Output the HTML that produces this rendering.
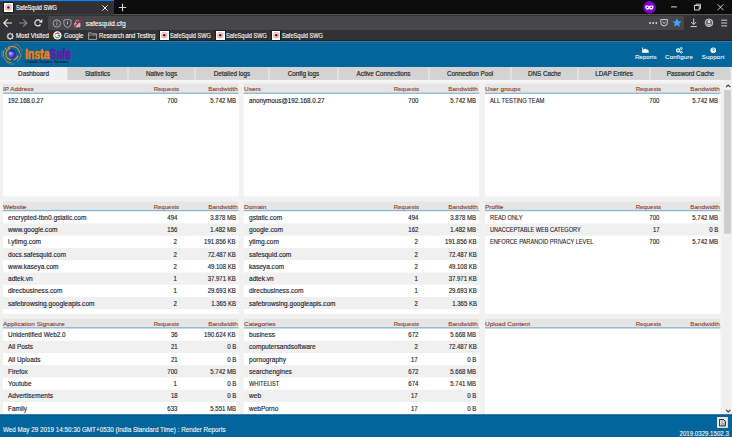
<!DOCTYPE html>
<html><head><meta charset="utf-8"><style>*{margin:0;padding:0;box-sizing:border-box}
html,body{width:732px;height:437px;overflow:hidden;background:#f1f1f1;font-family:'Liberation Sans',sans-serif;position:relative}
.a{position:absolute}
.t{position:absolute;white-space:nowrap}
</style></head>
<body>
<svg class="a" style="left:0px;top:0px" width="732" height="15"><rect x="0.000" y="0.000" width="732.000" height="14.600" fill="#0c0c0d"/></svg>
<svg class="a" style="left:0px;top:0px" width="114" height="15"><rect x="0.000" y="0.000" width="114.000" height="14.600" fill="#323234"/></svg>
<svg class="a" style="left:0px;top:0px" width="114" height="2"><rect x="0.000" y="0.000" width="114.000" height="1.100" fill="#0a84ff"/></svg>
<svg class="a" style="left:0px;top:14px" width="732" height="27"><rect x="0.000" y="0.600" width="732.000" height="26.000" fill="#323234"/></svg>
<div class="a" style="left:48.4px;top:16.0px;width:635.4px;height:13.8px;background:#474749;border-radius:2px;"></div>
<svg class="a" style="left:0px;top:40px" width="732" height="2"><rect x="0.000" y="0.000" width="732.000" height="1.200" fill="#26221f"/></svg>
<div class="a" style="left:4.3px;top:3.2px;width:8.7px;height:8.7px;background:#fff;box-shadow:0 0 0 0.7px #151515;"></div>
<svg class="a" style="left:4.3px;top:3.2px" width="8.7" height="8.7" viewBox="0 0 8.7 8.7"><circle cx="4.35" cy="4.45" r="2.7" fill="#ffe6da" stroke="#ffb594" stroke-width="1.4"/><circle cx="4.4" cy="4.5" r="1.3" fill="#1e10b0"/></svg>
<div class="t" style="top:4.71px;font-size:6.6px;line-height:6.6px;color:#f9f9fa;left:15.50px;-webkit-text-stroke:0.15px #f9f9fa;transform-origin:0 0;transform:scaleX(0.8539);">SafeSquid SWG</div>
<svg class="a" style="left:101px;top:3.5px" width="8" height="8" viewBox="0 0 8 8"><path d="M1.3 1.3L6.7 6.7M6.7 1.3L1.3 6.7" stroke="#e8e8e8" stroke-width="1"/></svg>
<svg class="a" style="left:118px;top:3px" width="9" height="9" viewBox="0 0 9 9"><path d="M4.5 0.8V8.2M0.8 4.5H8.2" stroke="#d0d0d0" stroke-width="1.1"/></svg>
<svg class="a" style="left:643.0px;top:1.2px" width="13" height="13" viewBox="0 0 13 13"><circle cx="6.4" cy="6.3" r="6.2" fill="#8000d7"/><path d="M2.2 5.0C3.5 4.3 5.0 4.4 6.35 5.0C7.7 4.4 9.2 4.3 10.5 5.0C10.5 7.4 9.5 8.7 8.0 8.7C7.2 8.7 6.8 8.1 6.35 7.8C5.9 8.1 5.5 8.7 4.7 8.7C3.2 8.7 2.2 7.4 2.2 5.0z" fill="#fff"/><circle cx="4.5" cy="6.3" r=".85" fill="#8000d7"/><circle cx="8.2" cy="6.3" r=".85" fill="#8000d7"/></svg>
<svg class="a" style="left:668px;top:2px" width="64" height="11" viewBox="0 0 64 11"><path d="M3.1 4.9H8.9" stroke="#f0f0f0" stroke-width="0.9"/><rect x="26.6" y="3.4" width="4.6" height="4.6" fill="none" stroke="#f0f0f0" stroke-width="0.85"/><path d="M28 3.4V2.2H32.5V6.7H31.2" fill="none" stroke="#f0f0f0" stroke-width="0.8"/><path d="M49.6 2.3L55.4 8.1M55.4 2.3L49.6 8.1" stroke="#f0f0f0" stroke-width="0.85"/></svg>
<svg class="a" style="left:2px;top:17px" width="44" height="12" viewBox="0 0 44 12"><path d="M1.8 6H10M5.6 2.2L1.8 6L5.6 9.8" fill="none" stroke="#e6e6e6" stroke-width="1.2"/><path d="M17.2 6H24.8M21.2 2.4L24.8 6L21.2 9.6" fill="none" stroke="#8a8a8c" stroke-width="1.2"/><path d="M38.5 7.4A3 3 0 1 1 38.2 4.0" fill="none" stroke="#e6e6e6" stroke-width="1.25"/><path d="M36.9 5.4L40.4 1.7L40.2 5.7z" fill="#e6e6e6"/></svg>
<svg class="a" style="left:52px;top:18.9px" width="32" height="9" viewBox="0 0 32 9"><circle cx="4.9" cy="4.5" r="3.7" fill="none" stroke="#bdbdbf" stroke-width="0.8"/><path d="M4.9 3.5V6.3" stroke="#bdbdbf" stroke-width="0.9"/><circle cx="4.9" cy="2.4" r=".5" fill="#bdbdbf"/><path d="M11.9 1.1C13 .8 14.5.5 15.5.5 16.5.5 18 .8 19.1 1.1V4.4C19.1 6.6 17 7.9 15.5 8.5 14 7.9 11.9 6.6 11.9 4.4z" fill="none" stroke="#bdbdbf" stroke-width="0.8"/><path d="M15.5 2.3V5.3" stroke="#bdbdbf" stroke-width="0.9"/><rect x="22.2" y="4" width="6.2" height="4.2" fill="#bdbdbf" rx=".4"/><path d="M23.6 4V2.9A1.7 1.7 0 0 1 27 2.9V4" fill="none" stroke="#bdbdbf" stroke-width="0.8"/><path d="M21.8 8.3L29 .8" stroke="#ff0039" stroke-width="1.3"/></svg>
<div class="t" style="top:21.13px;font-size:6.7px;line-height:6.7px;color:#f9f9fa;left:85.75px;-webkit-text-stroke:0.12px #f9f9fa;letter-spacing:0.048px;">safesquid.cfg</div>
<svg class="a" style="left:648px;top:17px" width="84" height="12" viewBox="0 0 84 12"><circle cx="2.0" cy="6.0" r=".95" fill="#d8d8d8"/><circle cx="5.15" cy="6.0" r=".95" fill="#d8d8d8"/><circle cx="8.3" cy="6.0" r=".95" fill="#d8d8d8"/><path d="M12.8 2.6H19.4V5.6A3.3 3.3 0 0 1 12.8 5.6z" fill="none" stroke="#d8d8d8" stroke-width="0.95"/><path d="M14.6 4.9L16.1 6.3L17.6 4.9" fill="none" stroke="#d8d8d8" stroke-width="0.95"/><path d="M29 1.3L30.4 4.2L33.5 4.5L31.2 6.6L31.9 9.7L29 8.1L26.1 9.7L26.8 6.6L24.5 4.5L27.6 4.2z" fill="#45a1ff"/><path d="M45.7 1.5V7.4M43.2 5L45.7 7.5L48.2 5M42.6 9.6H48.8" fill="none" stroke="#d8d8d8" stroke-width="0.95"/><circle cx="61" cy="5.8" r="3.8" fill="#6a6a6c" stroke="#d8d8d8" stroke-width="0.9"/><circle cx="61" cy="4.7" r="1.35" fill="#e0e0e0"/><path d="M58.7 8.3C59.2 7.0 62.8 7.0 63.3 8.3z" fill="#e0e0e0"/><path d="M73.2 3.2H79.2M73.2 6.0H79.2M73.2 8.9H79.2" stroke="#d8d8d8" stroke-width="0.95"/></svg>
<svg class="a" style="left:5.5px;top:31.9px" width="9" height="9" viewBox="0 0 9 9"><g fill="#d8d8d8"><rect x="3.6" y=".6" width="1.2" height="7.2"/><rect x=".6" y="3.6" width="7.2" height="1.2"/><rect x="3.6" y=".6" width="1.2" height="7.2" transform="rotate(45 4.2 4.2)"/><rect x="3.6" y=".6" width="1.2" height="7.2" transform="rotate(-45 4.2 4.2)"/></g><circle cx="4.2" cy="4.2" r="2.4" fill="#323234" stroke="#d8d8d8" stroke-width="1.1"/></svg>
<div class="t" style="top:32.87px;font-size:6.3px;line-height:6.3px;color:#f9f9fa;left:15.70px;-webkit-text-stroke:0.12px #f9f9fa;transform-origin:0 0;transform:scaleX(0.9653);">Most Visited</div>
<svg class="a" style="left:53.4px;top:31.3px" width="9" height="9" viewBox="0 0 9 9"><circle cx="4.4" cy="4.4" r="4.2" fill="#fff"/><g fill="none" stroke-width="1.25"><path d="M2.32 3.2A2.4 2.4 0 0 1 6.24 2.86" stroke="#ea4335"/><path d="M2.32 3.2A2.4 2.4 0 0 0 2.32 5.6" stroke="#fbbc05"/><path d="M2.32 5.6A2.4 2.4 0 0 0 6.24 5.94" stroke="#34a853"/><path d="M6.24 5.94A2.4 2.4 0 0 0 6.8 4.4H4.4" stroke="#4285f4"/></g></svg>
<div class="t" style="top:32.87px;font-size:6.3px;line-height:6.3px;color:#f9f9fa;left:64.00px;-webkit-text-stroke:0.12px #f9f9fa;transform-origin:0 0;transform:scaleX(0.9551);">Google</div>
<svg class="a" style="left:88px;top:31.8px" width="10" height="8" viewBox="0 0 10 8"><path d="M.6 7.4V.8H3.4L4.3 1.8H8.6V7.4z" fill="none" stroke="#bdbdbf" stroke-width="0.8"/><path d="M.6 3H8.6" stroke="#bdbdbf" stroke-width="0.7"/></svg>
<div class="t" style="top:32.87px;font-size:6.3px;line-height:6.3px;color:#f9f9fa;left:98.75px;-webkit-text-stroke:0.12px #f9f9fa;transform-origin:0 0;transform:scaleX(0.9252);">Research and Testing</div>
<div class="a" style="left:160.2px;top:31.3px;width:8.4px;height:8.4px;background:#fff;box-shadow:0 0 0 0.7px #151515;"></div>
<svg class="a" style="left:160.2px;top:31.3px" width="8.4" height="8.4" viewBox="0 0 8.4 8.4"><circle cx="4.2" cy="4.3" r="2.6" fill="#ffe6da" stroke="#ffb594" stroke-width="1.3"/><circle cx="4.25" cy="4.35" r="1.25" fill="#1e10b0"/></svg>
<div class="t" style="top:32.87px;font-size:6.3px;line-height:6.3px;color:#f9f9fa;left:170.20px;-webkit-text-stroke:0.12px #f9f9fa;transform-origin:0 0;transform:scaleX(0.8897);">SafeSquid SWG</div>
<div class="a" style="left:216.2px;top:31.3px;width:8.4px;height:8.4px;background:#fff;box-shadow:0 0 0 0.7px #151515;"></div>
<svg class="a" style="left:216.2px;top:31.3px" width="8.4" height="8.4" viewBox="0 0 8.4 8.4"><circle cx="4.2" cy="4.3" r="2.6" fill="#ffe6da" stroke="#ffb594" stroke-width="1.3"/><circle cx="4.25" cy="4.35" r="1.25" fill="#1e10b0"/></svg>
<div class="t" style="top:32.87px;font-size:6.3px;line-height:6.3px;color:#f9f9fa;left:225.80px;-webkit-text-stroke:0.12px #f9f9fa;transform-origin:0 0;transform:scaleX(0.8897);">SafeSquid SWG</div>
<div class="a" style="left:272.0px;top:31.3px;width:8.4px;height:8.4px;background:#fff;box-shadow:0 0 0 0.7px #151515;"></div>
<svg class="a" style="left:272.0px;top:31.3px" width="8.4" height="8.4" viewBox="0 0 8.4 8.4"><circle cx="4.2" cy="4.3" r="2.6" fill="#ffe6da" stroke="#ffb594" stroke-width="1.3"/><circle cx="4.25" cy="4.35" r="1.25" fill="#1e10b0"/></svg>
<div class="t" style="top:32.87px;font-size:6.3px;line-height:6.3px;color:#f9f9fa;left:281.80px;-webkit-text-stroke:0.12px #f9f9fa;transform-origin:0 0;transform:scaleX(0.8897);">SafeSquid SWG</div>
<svg class="a" style="left:0px;top:41px" width="732" height="27"><rect x="0.000" y="0.200" width="732.000" height="25.900" fill="#02669c"/></svg>
<svg class="a" style="left:0px;top:42px" width="24" height="24" viewBox="0 0 24 24"><defs><radialGradient id="ball" cx="0.3" cy="0.45" r="0.75"><stop offset="0" stop-color="#d8d0ff"/><stop offset="0.35" stop-color="#7a5cf0"/><stop offset="0.8" stop-color="#4a22b8"/><stop offset="1" stop-color="#2a1070"/></radialGradient></defs><path d="M11.04 17.91A6.1 6.1 0 0 1 10.01 6.17" fill="none" stroke="#f0882a" stroke-width="1.2" opacity="1"/><path d="M17.99 13.48A6.1 6.1 0 0 1 13.68 17.79" fill="none" stroke="#f0882a" stroke-width="1.2" opacity="1"/><path d="M7.80 5.76A7.5 7.5 0 0 1 19.57 11.25" fill="none" stroke="#f0882a" stroke-width="1.1" opacity="1"/><path d="M11.33 20.67A8.8 8.8 0 0 1 4.12 8.18" fill="none" stroke="#f0882a" stroke-width="0.9" opacity="0.95"/><path d="M20.87 11.13A8.8 8.8 0 0 1 17.15 19.11" fill="none" stroke="#f0882a" stroke-width="0.9" opacity="0.9"/><path d="M13.91 1.66A10.4 10.4 0 0 1 22.15 9.21" fill="none" stroke="#f0882a" stroke-width="0.7" opacity="0.7"/><path d="M14.79 21.95A10.4 10.4 0 0 1 5.42 19.87" fill="none" stroke="#f0882a" stroke-width="0.7" opacity="0.7"/><path d="M2.33 15.46A10.4 10.4 0 0 1 2.33 8.34" fill="none" stroke="#f0882a" stroke-width="0.7" opacity="0.6"/><circle cx="5.5" cy="6.6" r="0.85" fill="#f0882a"/><circle cx="12.1" cy="11.9" r="3.6" fill="url(#ball)"/><path d="M10.2 9.3A3.6 3.6 0 0 1 14.6 9.6" stroke="#1c0c50" stroke-width="1" fill="none"/></svg>
<svg class="a" style="left:0px;top:41.2px" width="80" height="26" viewBox="0 0 80 26"><text x="24.9" y="17.6" font-family="Liberation Sans" font-weight="bold" font-size="14.6" textLength="24.6" lengthAdjust="spacingAndGlyphs" fill="#fa7a0a" stroke="#fa7a0a" stroke-width="0.55">Insta</text><text x="49.6" y="17.6" font-family="Liberation Sans" font-weight="bold" font-size="14.6" textLength="21.6" lengthAdjust="spacingAndGlyphs" fill="#6a14a0" stroke="#6a14a0" stroke-width="0.55">Safe</text><text x="25.2" y="21.6" font-family="Liberation Serif" font-weight="bold" font-size="4.2" textLength="44" lengthAdjust="spacingAndGlyphs" fill="#0d1b33">Cloud. Secure. Instant.</text></svg>
<svg class="a" style="left:640px;top:46.5px" width="80" height="7" viewBox="0 0 80 7"><path d="M2.0 5.8V.6H2.8V5.1H8.8V5.8z" fill="#fff"/><path d="M3.0 5.1V3.0L4.9 1.5L6.4 2.4L7.6 2.6L8.6 3.6V5.1z" fill="#fff"/><circle cx="38.1" cy="3.4" r="1.5" fill="none" stroke="#fff" stroke-width="1.3"/><circle cx="41.3" cy="1.5" r=".95" fill="none" stroke="#fff" stroke-width=".9"/><circle cx="41.3" cy="5.3" r=".95" fill="none" stroke="#fff" stroke-width=".9"/><circle cx="73.3" cy="3.2" r="2.8" fill="#fff"/><path d="M72.3 2.5A1 1 0 1 1 73.3 3.6V4" fill="none" stroke="#02669c" stroke-width=".7"/><circle cx="73.3" cy="5" r=".4" fill="#02669c"/></svg>
<div class="t" style="top:54.35px;font-size:6.2px;line-height:6.2px;color:#eef4f8;left:634.90px;-webkit-text-stroke:0.1px #eef4f8;letter-spacing:-0.012px;">Reports</div>
<div class="t" style="top:54.35px;font-size:6.2px;line-height:6.2px;color:#eef4f8;left:665.10px;-webkit-text-stroke:0.1px #eef4f8;letter-spacing:0.132px;">Configure</div>
<div class="t" style="top:54.35px;font-size:6.2px;line-height:6.2px;color:#eef4f8;left:701.70px;-webkit-text-stroke:0.1px #eef4f8;letter-spacing:0.171px;">Support</div>
<svg class="a" style="left:0px;top:67px" width="732" height="13"><rect x="0.000" y="0.100" width="732.000" height="12.800" fill="#d3d3d3"/></svg>
<svg class="a" style="left:0px;top:67px" width="67" height="13"><rect x="0.000" y="0.100" width="67.000" height="12.800" fill="#f0f0f0"/></svg>
<div class="t" style="top:70.67px;font-size:6.3px;line-height:6.3px;color:#262626;left:33.50px;-webkit-text-stroke:0.18px #262626;transform:translateX(-50%);">Dashboard</div>
<svg class="a" style="left:66px;top:67px" width="2" height="13"><rect x="0.500" y="0.100" width="1.000" height="12.800" fill="#eeeeee"/></svg>
<div class="t" style="top:70.67px;font-size:6.3px;line-height:6.3px;color:#262626;left:97.50px;-webkit-text-stroke:0.18px #262626;transform:translateX(-50%);">Statistics</div>
<svg class="a" style="left:127px;top:67px" width="2" height="13"><rect x="0.500" y="0.100" width="1.000" height="12.800" fill="#eeeeee"/></svg>
<div class="t" style="top:70.67px;font-size:6.3px;line-height:6.3px;color:#262626;left:161.50px;-webkit-text-stroke:0.18px #262626;transform:translateX(-50%);">Native logs</div>
<svg class="a" style="left:194px;top:67px" width="2" height="13"><rect x="0.500" y="0.100" width="1.000" height="12.800" fill="#eeeeee"/></svg>
<div class="t" style="top:70.67px;font-size:6.3px;line-height:6.3px;color:#262626;left:232.00px;-webkit-text-stroke:0.18px #262626;transform:translateX(-50%);">Detailed logs</div>
<svg class="a" style="left:268px;top:67px" width="2" height="13"><rect x="0.500" y="0.100" width="1.000" height="12.800" fill="#eeeeee"/></svg>
<div class="t" style="top:70.67px;font-size:6.3px;line-height:6.3px;color:#262626;left:303.50px;-webkit-text-stroke:0.18px #262626;transform:translateX(-50%);">Config logs</div>
<svg class="a" style="left:337px;top:67px" width="2" height="13"><rect x="0.500" y="0.100" width="1.000" height="12.800" fill="#eeeeee"/></svg>
<div class="t" style="top:70.67px;font-size:6.3px;line-height:6.3px;color:#262626;left:383.50px;-webkit-text-stroke:0.18px #262626;transform:translateX(-50%);">Active Connections</div>
<svg class="a" style="left:428px;top:67px" width="2" height="13"><rect x="0.500" y="0.100" width="1.000" height="12.800" fill="#eeeeee"/></svg>
<div class="t" style="top:70.67px;font-size:6.3px;line-height:6.3px;color:#262626;left:470.00px;-webkit-text-stroke:0.18px #262626;transform:translateX(-50%);">Connection Pool</div>
<svg class="a" style="left:510px;top:67px" width="2" height="13"><rect x="0.500" y="0.100" width="1.000" height="12.800" fill="#eeeeee"/></svg>
<div class="t" style="top:70.67px;font-size:6.3px;line-height:6.3px;color:#262626;left:544.50px;-webkit-text-stroke:0.18px #262626;transform:translateX(-50%);">DNS Cache</div>
<svg class="a" style="left:577px;top:67px" width="2" height="13"><rect x="0.500" y="0.100" width="1.000" height="12.800" fill="#eeeeee"/></svg>
<div class="t" style="top:70.67px;font-size:6.3px;line-height:6.3px;color:#262626;left:614.00px;-webkit-text-stroke:0.18px #262626;transform:translateX(-50%);">LDAP Entries</div>
<svg class="a" style="left:649px;top:67px" width="2" height="13"><rect x="0.500" y="0.100" width="1.000" height="12.800" fill="#eeeeee"/></svg>
<div class="t" style="top:70.67px;font-size:6.3px;line-height:6.3px;color:#262626;left:690.50px;-webkit-text-stroke:0.18px #262626;transform:translateX(-50%);">Password Cache</div>
<svg class="a" style="left:730px;top:67px" width="2" height="13"><rect x="0.500" y="0.100" width="1.500" height="12.800" fill="#eeeeee"/></svg>
<svg class="a" style="left:0px;top:80px" width="732" height="2"><rect x="0.000" y="0.000" width="732.000" height="1.600" fill="#f8f8f8"/></svg>
<svg class="a" style="left:3px;top:84px" width="236" height="113"><rect x="0.000" y="0.000" width="235.600" height="112.400" fill="#fff"/></svg>
<svg class="a" style="left:3px;top:84px" width="236" height="9"><rect x="0.000" y="0.000" width="235.600" height="8.500" fill="#e5e5e5"/></svg>
<svg class="a" style="left:3px;top:92px" width="236" height="2"><rect x="0.000" y="0.500" width="235.600" height="1.400" fill="#8bb7d0"/></svg>
<svg class="a" style="left:243px;top:84px" width="237" height="113"><rect x="0.750" y="0.000" width="235.600" height="112.400" fill="#fff"/></svg>
<svg class="a" style="left:243px;top:84px" width="237" height="9"><rect x="0.750" y="0.000" width="235.600" height="8.500" fill="#e5e5e5"/></svg>
<svg class="a" style="left:243px;top:92px" width="237" height="2"><rect x="0.750" y="0.500" width="235.600" height="1.400" fill="#8bb7d0"/></svg>
<svg class="a" style="left:484px;top:84px" width="237" height="113"><rect x="0.900" y="0.000" width="235.600" height="112.400" fill="#fff"/></svg>
<svg class="a" style="left:484px;top:84px" width="237" height="9"><rect x="0.900" y="0.000" width="235.600" height="8.500" fill="#e5e5e5"/></svg>
<svg class="a" style="left:484px;top:92px" width="237" height="2"><rect x="0.900" y="0.500" width="235.600" height="1.400" fill="#8bb7d0"/></svg>
<svg class="a" style="left:3px;top:201px" width="236" height="113"><rect x="0.000" y="0.350" width="235.600" height="112.400" fill="#fff"/></svg>
<svg class="a" style="left:3px;top:201px" width="236" height="9"><rect x="0.000" y="0.350" width="235.600" height="8.500" fill="#e5e5e5"/></svg>
<svg class="a" style="left:3px;top:209px" width="236" height="3"><rect x="0.000" y="0.850" width="235.600" height="1.400" fill="#8bb7d0"/></svg>
<svg class="a" style="left:3px;top:223px" width="236" height="13"><rect x="0.000" y="0.490" width="235.600" height="12.240" fill="#f0f0f0"/></svg>
<svg class="a" style="left:3px;top:247px" width="236" height="14"><rect x="0.000" y="0.970" width="235.600" height="12.240" fill="#f0f0f0"/></svg>
<svg class="a" style="left:3px;top:272px" width="236" height="13"><rect x="0.000" y="0.450" width="235.600" height="12.240" fill="#f0f0f0"/></svg>
<svg class="a" style="left:3px;top:296px" width="236" height="14"><rect x="0.000" y="0.930" width="235.600" height="12.240" fill="#f0f0f0"/></svg>
<svg class="a" style="left:243px;top:201px" width="237" height="113"><rect x="0.750" y="0.350" width="235.600" height="112.400" fill="#fff"/></svg>
<svg class="a" style="left:243px;top:201px" width="237" height="9"><rect x="0.750" y="0.350" width="235.600" height="8.500" fill="#e5e5e5"/></svg>
<svg class="a" style="left:243px;top:209px" width="237" height="3"><rect x="0.750" y="0.850" width="235.600" height="1.400" fill="#8bb7d0"/></svg>
<svg class="a" style="left:243px;top:223px" width="237" height="13"><rect x="0.750" y="0.490" width="235.600" height="12.240" fill="#f0f0f0"/></svg>
<svg class="a" style="left:243px;top:247px" width="237" height="14"><rect x="0.750" y="0.970" width="235.600" height="12.240" fill="#f0f0f0"/></svg>
<svg class="a" style="left:243px;top:272px" width="237" height="13"><rect x="0.750" y="0.450" width="235.600" height="12.240" fill="#f0f0f0"/></svg>
<svg class="a" style="left:243px;top:296px" width="237" height="14"><rect x="0.750" y="0.930" width="235.600" height="12.240" fill="#f0f0f0"/></svg>
<svg class="a" style="left:484px;top:201px" width="237" height="113"><rect x="0.900" y="0.350" width="235.600" height="112.400" fill="#fff"/></svg>
<svg class="a" style="left:484px;top:201px" width="237" height="9"><rect x="0.900" y="0.350" width="235.600" height="8.500" fill="#e5e5e5"/></svg>
<svg class="a" style="left:484px;top:209px" width="237" height="3"><rect x="0.900" y="0.850" width="235.600" height="1.400" fill="#8bb7d0"/></svg>
<svg class="a" style="left:484px;top:223px" width="237" height="13"><rect x="0.900" y="0.490" width="235.600" height="12.240" fill="#f0f0f0"/></svg>
<svg class="a" style="left:3px;top:318px" width="236" height="113"><rect x="0.000" y="0.600" width="235.600" height="112.400" fill="#fff"/></svg>
<svg class="a" style="left:3px;top:318px" width="236" height="10"><rect x="0.000" y="0.600" width="235.600" height="8.500" fill="#e5e5e5"/></svg>
<svg class="a" style="left:3px;top:327px" width="236" height="2"><rect x="0.000" y="0.100" width="235.600" height="1.400" fill="#8bb7d0"/></svg>
<svg class="a" style="left:3px;top:340px" width="236" height="13"><rect x="0.000" y="0.740" width="235.600" height="12.240" fill="#f0f0f0"/></svg>
<svg class="a" style="left:3px;top:365px" width="236" height="13"><rect x="0.000" y="0.220" width="235.600" height="12.240" fill="#f0f0f0"/></svg>
<svg class="a" style="left:3px;top:389px" width="236" height="13"><rect x="0.000" y="0.700" width="235.600" height="12.240" fill="#f0f0f0"/></svg>
<svg class="a" style="left:243px;top:318px" width="237" height="113"><rect x="0.750" y="0.600" width="235.600" height="112.400" fill="#fff"/></svg>
<svg class="a" style="left:243px;top:318px" width="237" height="10"><rect x="0.750" y="0.600" width="235.600" height="8.500" fill="#e5e5e5"/></svg>
<svg class="a" style="left:243px;top:327px" width="237" height="2"><rect x="0.750" y="0.100" width="235.600" height="1.400" fill="#8bb7d0"/></svg>
<svg class="a" style="left:243px;top:340px" width="237" height="13"><rect x="0.750" y="0.740" width="235.600" height="12.240" fill="#f0f0f0"/></svg>
<svg class="a" style="left:243px;top:365px" width="237" height="13"><rect x="0.750" y="0.220" width="235.600" height="12.240" fill="#f0f0f0"/></svg>
<svg class="a" style="left:243px;top:389px" width="237" height="13"><rect x="0.750" y="0.700" width="235.600" height="12.240" fill="#f0f0f0"/></svg>
<svg class="a" style="left:484px;top:318px" width="237" height="113"><rect x="0.900" y="0.600" width="235.600" height="112.400" fill="#fff"/></svg>
<svg class="a" style="left:484px;top:318px" width="237" height="10"><rect x="0.900" y="0.600" width="235.600" height="8.500" fill="#e5e5e5"/></svg>
<svg class="a" style="left:484px;top:327px" width="237" height="2"><rect x="0.900" y="0.100" width="235.600" height="1.400" fill="#8bb7d0"/></svg>
<div class="t" style="top:86.15px;font-size:6.2px;line-height:6.2px;color:#8e4430;left:3.30px;-webkit-text-stroke:0.14px #8e4430;transform-origin:0 0;transform:scaleX(1.0252);">IP Address</div>
<div class="t" style="top:86.15px;font-size:6.2px;line-height:6.2px;color:#8e4430;right:553.20px;-webkit-text-stroke:0.12px #8e4430;transform-origin:100% 0;transform:scaleX(0.9755);">Requests</div>
<div class="t" style="top:86.15px;font-size:6.2px;line-height:6.2px;color:#8e4430;right:494.40px;-webkit-text-stroke:0.12px #8e4430;transform-origin:100% 0;transform:scaleX(1.0240);">Bandwidth</div>
<div class="t" style="top:97.54px;font-size:6.8px;line-height:6.8px;color:#262630;left:8.30px;-webkit-text-stroke:0.15px #262630;transform-origin:0 0;transform:scaleX(0.8900);">192.168.0.27</div>
<div class="t" style="top:97.54px;font-size:6.8px;line-height:6.8px;color:#262630;right:554.80px;-webkit-text-stroke:0.15px #262630;transform-origin:100% 0;transform:scaleX(0.8800);">700</div>
<div class="t" style="top:97.54px;font-size:6.8px;line-height:6.8px;color:#262630;right:496.20px;-webkit-text-stroke:0.15px #262630;transform-origin:100% 0;transform:scaleX(0.8850);">5.742 MB</div>
<div class="t" style="top:86.15px;font-size:6.2px;line-height:6.2px;color:#8e4430;left:244.05px;-webkit-text-stroke:0.14px #8e4430;transform-origin:0 0;transform:scaleX(1.0428);">Users</div>
<div class="t" style="top:86.15px;font-size:6.2px;line-height:6.2px;color:#8e4430;right:312.45px;-webkit-text-stroke:0.12px #8e4430;transform-origin:100% 0;transform:scaleX(0.9755);">Requests</div>
<div class="t" style="top:86.15px;font-size:6.2px;line-height:6.2px;color:#8e4430;right:253.65px;-webkit-text-stroke:0.12px #8e4430;transform-origin:100% 0;transform:scaleX(1.0240);">Bandwidth</div>
<div class="t" style="top:97.54px;font-size:6.8px;line-height:6.8px;color:#262630;left:249.05px;-webkit-text-stroke:0.15px #262630;transform-origin:0 0;transform:scaleX(0.9241);">anonymous@192.168.0.27</div>
<div class="t" style="top:97.54px;font-size:6.8px;line-height:6.8px;color:#262630;right:314.05px;-webkit-text-stroke:0.15px #262630;transform-origin:100% 0;transform:scaleX(0.8800);">700</div>
<div class="t" style="top:97.54px;font-size:6.8px;line-height:6.8px;color:#262630;right:255.45px;-webkit-text-stroke:0.15px #262630;transform-origin:100% 0;transform:scaleX(0.8850);">5.742 MB</div>
<div class="t" style="top:86.15px;font-size:6.2px;line-height:6.2px;color:#8e4430;left:485.20px;-webkit-text-stroke:0.14px #8e4430;transform-origin:0 0;transform:scaleX(1.0510);">User groups</div>
<div class="t" style="top:86.15px;font-size:6.2px;line-height:6.2px;color:#8e4430;right:71.30px;-webkit-text-stroke:0.12px #8e4430;transform-origin:100% 0;transform:scaleX(0.9755);">Requests</div>
<div class="t" style="top:86.15px;font-size:6.2px;line-height:6.2px;color:#8e4430;right:12.50px;-webkit-text-stroke:0.12px #8e4430;transform-origin:100% 0;transform:scaleX(1.0240);">Bandwidth</div>
<div class="t" style="top:97.61px;font-size:6.6px;line-height:6.6px;color:#262630;left:490.20px;-webkit-text-stroke:0.12px #262630;transform-origin:0 0;transform:scaleX(0.8801);">ALL TESTING TEAM</div>
<div class="t" style="top:97.54px;font-size:6.8px;line-height:6.8px;color:#262630;right:72.90px;-webkit-text-stroke:0.15px #262630;transform-origin:100% 0;transform:scaleX(0.8800);">700</div>
<div class="t" style="top:97.54px;font-size:6.8px;line-height:6.8px;color:#262630;right:14.30px;-webkit-text-stroke:0.15px #262630;transform-origin:100% 0;transform:scaleX(0.8850);">5.742 MB</div>
<div class="t" style="top:203.50px;font-size:6.2px;line-height:6.2px;color:#8e4430;left:3.30px;-webkit-text-stroke:0.14px #8e4430;transform-origin:0 0;transform:scaleX(1.0497);">Website</div>
<div class="t" style="top:203.50px;font-size:6.2px;line-height:6.2px;color:#8e4430;right:553.20px;-webkit-text-stroke:0.12px #8e4430;transform-origin:100% 0;transform:scaleX(0.9755);">Requests</div>
<div class="t" style="top:203.50px;font-size:6.2px;line-height:6.2px;color:#8e4430;right:494.40px;-webkit-text-stroke:0.12px #8e4430;transform-origin:100% 0;transform:scaleX(1.0240);">Bandwidth</div>
<div class="t" style="top:214.89px;font-size:6.8px;line-height:6.8px;color:#262630;left:8.30px;-webkit-text-stroke:0.15px #262630;transform-origin:0 0;transform:scaleX(0.9608);">encrypted-tbn0.gstatic.com</div>
<div class="t" style="top:214.89px;font-size:6.8px;line-height:6.8px;color:#262630;right:554.80px;-webkit-text-stroke:0.15px #262630;transform-origin:100% 0;transform:scaleX(0.8800);">494</div>
<div class="t" style="top:214.89px;font-size:6.8px;line-height:6.8px;color:#262630;right:496.20px;-webkit-text-stroke:0.15px #262630;transform-origin:100% 0;transform:scaleX(0.8850);">3.878 MB</div>
<div class="t" style="top:227.13px;font-size:6.8px;line-height:6.8px;color:#262630;left:8.30px;-webkit-text-stroke:0.15px #262630;transform-origin:0 0;transform:scaleX(0.9629);">www.google.com</div>
<div class="t" style="top:227.13px;font-size:6.8px;line-height:6.8px;color:#262630;right:554.80px;-webkit-text-stroke:0.15px #262630;transform-origin:100% 0;transform:scaleX(0.8800);">156</div>
<div class="t" style="top:227.13px;font-size:6.8px;line-height:6.8px;color:#262630;right:496.20px;-webkit-text-stroke:0.15px #262630;transform-origin:100% 0;transform:scaleX(0.8850);">1.482 MB</div>
<div class="t" style="top:239.37px;font-size:6.8px;line-height:6.8px;color:#262630;left:8.30px;-webkit-text-stroke:0.15px #262630;transform-origin:0 0;transform:scaleX(0.9609);">i.ytimg.com</div>
<div class="t" style="top:239.37px;font-size:6.8px;line-height:6.8px;color:#262630;right:554.80px;-webkit-text-stroke:0.15px #262630;transform-origin:100% 0;transform:scaleX(0.8800);">2</div>
<div class="t" style="top:239.37px;font-size:6.8px;line-height:6.8px;color:#262630;right:496.20px;-webkit-text-stroke:0.15px #262630;transform-origin:100% 0;transform:scaleX(0.8840);">191.856 KB</div>
<div class="t" style="top:251.61px;font-size:6.8px;line-height:6.8px;color:#262630;left:8.30px;-webkit-text-stroke:0.15px #262630;transform-origin:0 0;transform:scaleX(0.9644);">docs.safesquid.com</div>
<div class="t" style="top:251.61px;font-size:6.8px;line-height:6.8px;color:#262630;right:554.80px;-webkit-text-stroke:0.15px #262630;transform-origin:100% 0;transform:scaleX(0.8800);">2</div>
<div class="t" style="top:251.61px;font-size:6.8px;line-height:6.8px;color:#262630;right:496.20px;-webkit-text-stroke:0.15px #262630;transform-origin:100% 0;transform:scaleX(0.8844);">72.487 KB</div>
<div class="t" style="top:263.85px;font-size:6.8px;line-height:6.8px;color:#262630;left:8.30px;-webkit-text-stroke:0.15px #262630;transform-origin:0 0;transform:scaleX(0.9629);">www.kaseya.com</div>
<div class="t" style="top:263.85px;font-size:6.8px;line-height:6.8px;color:#262630;right:554.80px;-webkit-text-stroke:0.15px #262630;transform-origin:100% 0;transform:scaleX(0.8800);">2</div>
<div class="t" style="top:263.85px;font-size:6.8px;line-height:6.8px;color:#262630;right:496.20px;-webkit-text-stroke:0.15px #262630;transform-origin:100% 0;transform:scaleX(0.8844);">49.108 KB</div>
<div class="t" style="top:276.09px;font-size:6.8px;line-height:6.8px;color:#262630;left:8.30px;-webkit-text-stroke:0.15px #262630;transform-origin:0 0;transform:scaleX(0.9637);">adtek.vn</div>
<div class="t" style="top:276.09px;font-size:6.8px;line-height:6.8px;color:#262630;right:554.80px;-webkit-text-stroke:0.15px #262630;transform-origin:100% 0;transform:scaleX(0.8800);">1</div>
<div class="t" style="top:276.09px;font-size:6.8px;line-height:6.8px;color:#262630;right:496.20px;-webkit-text-stroke:0.15px #262630;transform-origin:100% 0;transform:scaleX(0.8844);">37.971 KB</div>
<div class="t" style="top:288.33px;font-size:6.8px;line-height:6.8px;color:#262630;left:8.30px;-webkit-text-stroke:0.15px #262630;transform-origin:0 0;transform:scaleX(0.9671);">direcbusiness.com</div>
<div class="t" style="top:288.33px;font-size:6.8px;line-height:6.8px;color:#262630;right:554.80px;-webkit-text-stroke:0.15px #262630;transform-origin:100% 0;transform:scaleX(0.8800);">1</div>
<div class="t" style="top:288.33px;font-size:6.8px;line-height:6.8px;color:#262630;right:496.20px;-webkit-text-stroke:0.15px #262630;transform-origin:100% 0;transform:scaleX(0.8844);">29.693 KB</div>
<div class="t" style="top:300.57px;font-size:6.8px;line-height:6.8px;color:#262630;left:8.30px;-webkit-text-stroke:0.15px #262630;transform-origin:0 0;transform:scaleX(0.9663);">safebrowsing.googleapis.com</div>
<div class="t" style="top:300.57px;font-size:6.8px;line-height:6.8px;color:#262630;right:554.80px;-webkit-text-stroke:0.15px #262630;transform-origin:100% 0;transform:scaleX(0.8800);">2</div>
<div class="t" style="top:300.57px;font-size:6.8px;line-height:6.8px;color:#262630;right:496.20px;-webkit-text-stroke:0.15px #262630;transform-origin:100% 0;transform:scaleX(0.8850);">1.365 KB</div>
<div class="t" style="top:203.50px;font-size:6.2px;line-height:6.2px;color:#8e4430;left:244.05px;-webkit-text-stroke:0.14px #8e4430;transform-origin:0 0;transform:scaleX(1.0468);">Domain</div>
<div class="t" style="top:203.50px;font-size:6.2px;line-height:6.2px;color:#8e4430;right:312.45px;-webkit-text-stroke:0.12px #8e4430;transform-origin:100% 0;transform:scaleX(0.9755);">Requests</div>
<div class="t" style="top:203.50px;font-size:6.2px;line-height:6.2px;color:#8e4430;right:253.65px;-webkit-text-stroke:0.12px #8e4430;transform-origin:100% 0;transform:scaleX(1.0240);">Bandwidth</div>
<div class="t" style="top:214.89px;font-size:6.8px;line-height:6.8px;color:#262630;left:249.05px;-webkit-text-stroke:0.15px #262630;transform-origin:0 0;transform:scaleX(0.9655);">gstatic.com</div>
<div class="t" style="top:214.89px;font-size:6.8px;line-height:6.8px;color:#262630;right:314.05px;-webkit-text-stroke:0.15px #262630;transform-origin:100% 0;transform:scaleX(0.8800);">494</div>
<div class="t" style="top:214.89px;font-size:6.8px;line-height:6.8px;color:#262630;right:255.45px;-webkit-text-stroke:0.15px #262630;transform-origin:100% 0;transform:scaleX(0.8850);">3.878 MB</div>
<div class="t" style="top:227.13px;font-size:6.8px;line-height:6.8px;color:#262630;left:249.05px;-webkit-text-stroke:0.15px #262630;transform-origin:0 0;transform:scaleX(0.9650);">google.com</div>
<div class="t" style="top:227.13px;font-size:6.8px;line-height:6.8px;color:#262630;right:314.05px;-webkit-text-stroke:0.15px #262630;transform-origin:100% 0;transform:scaleX(0.8800);">162</div>
<div class="t" style="top:227.13px;font-size:6.8px;line-height:6.8px;color:#262630;right:255.45px;-webkit-text-stroke:0.15px #262630;transform-origin:100% 0;transform:scaleX(0.8850);">1.482 MB</div>
<div class="t" style="top:239.37px;font-size:6.8px;line-height:6.8px;color:#262630;left:249.05px;-webkit-text-stroke:0.15px #262630;transform-origin:0 0;transform:scaleX(0.9644);">ytimg.com</div>
<div class="t" style="top:239.37px;font-size:6.8px;line-height:6.8px;color:#262630;right:314.05px;-webkit-text-stroke:0.15px #262630;transform-origin:100% 0;transform:scaleX(0.8800);">2</div>
<div class="t" style="top:239.37px;font-size:6.8px;line-height:6.8px;color:#262630;right:255.45px;-webkit-text-stroke:0.15px #262630;transform-origin:100% 0;transform:scaleX(0.8840);">191.856 KB</div>
<div class="t" style="top:251.61px;font-size:6.8px;line-height:6.8px;color:#262630;left:249.05px;-webkit-text-stroke:0.15px #262630;transform-origin:0 0;transform:scaleX(0.9662);">safesquid.com</div>
<div class="t" style="top:251.61px;font-size:6.8px;line-height:6.8px;color:#262630;right:314.05px;-webkit-text-stroke:0.15px #262630;transform-origin:100% 0;transform:scaleX(0.8800);">2</div>
<div class="t" style="top:251.61px;font-size:6.8px;line-height:6.8px;color:#262630;right:255.45px;-webkit-text-stroke:0.15px #262630;transform-origin:100% 0;transform:scaleX(0.8844);">72.487 KB</div>
<div class="t" style="top:263.85px;font-size:6.8px;line-height:6.8px;color:#262630;left:249.05px;-webkit-text-stroke:0.15px #262630;transform-origin:0 0;transform:scaleX(0.9650);">kaseya.com</div>
<div class="t" style="top:263.85px;font-size:6.8px;line-height:6.8px;color:#262630;right:314.05px;-webkit-text-stroke:0.15px #262630;transform-origin:100% 0;transform:scaleX(0.8800);">2</div>
<div class="t" style="top:263.85px;font-size:6.8px;line-height:6.8px;color:#262630;right:255.45px;-webkit-text-stroke:0.15px #262630;transform-origin:100% 0;transform:scaleX(0.8844);">49.108 KB</div>
<div class="t" style="top:276.09px;font-size:6.8px;line-height:6.8px;color:#262630;left:249.05px;-webkit-text-stroke:0.15px #262630;transform-origin:0 0;transform:scaleX(0.9637);">adtek.vn</div>
<div class="t" style="top:276.09px;font-size:6.8px;line-height:6.8px;color:#262630;right:314.05px;-webkit-text-stroke:0.15px #262630;transform-origin:100% 0;transform:scaleX(0.8800);">1</div>
<div class="t" style="top:276.09px;font-size:6.8px;line-height:6.8px;color:#262630;right:255.45px;-webkit-text-stroke:0.15px #262630;transform-origin:100% 0;transform:scaleX(0.8844);">37.971 KB</div>
<div class="t" style="top:288.33px;font-size:6.8px;line-height:6.8px;color:#262630;left:249.05px;-webkit-text-stroke:0.15px #262630;transform-origin:0 0;transform:scaleX(0.9671);">direcbusiness.com</div>
<div class="t" style="top:288.33px;font-size:6.8px;line-height:6.8px;color:#262630;right:314.05px;-webkit-text-stroke:0.15px #262630;transform-origin:100% 0;transform:scaleX(0.8800);">1</div>
<div class="t" style="top:288.33px;font-size:6.8px;line-height:6.8px;color:#262630;right:255.45px;-webkit-text-stroke:0.15px #262630;transform-origin:100% 0;transform:scaleX(0.8844);">29.693 KB</div>
<div class="t" style="top:300.57px;font-size:6.8px;line-height:6.8px;color:#262630;left:249.05px;-webkit-text-stroke:0.15px #262630;transform-origin:0 0;transform:scaleX(0.9663);">safebrowsing.googleapis.com</div>
<div class="t" style="top:300.57px;font-size:6.8px;line-height:6.8px;color:#262630;right:314.05px;-webkit-text-stroke:0.15px #262630;transform-origin:100% 0;transform:scaleX(0.8800);">2</div>
<div class="t" style="top:300.57px;font-size:6.8px;line-height:6.8px;color:#262630;right:255.45px;-webkit-text-stroke:0.15px #262630;transform-origin:100% 0;transform:scaleX(0.8850);">1.365 KB</div>
<div class="t" style="top:203.50px;font-size:6.2px;line-height:6.2px;color:#8e4430;left:485.20px;-webkit-text-stroke:0.14px #8e4430;transform-origin:0 0;transform:scaleX(1.0497);">Profile</div>
<div class="t" style="top:203.50px;font-size:6.2px;line-height:6.2px;color:#8e4430;right:71.30px;-webkit-text-stroke:0.12px #8e4430;transform-origin:100% 0;transform:scaleX(0.9755);">Requests</div>
<div class="t" style="top:203.50px;font-size:6.2px;line-height:6.2px;color:#8e4430;right:12.50px;-webkit-text-stroke:0.12px #8e4430;transform-origin:100% 0;transform:scaleX(1.0240);">Bandwidth</div>
<div class="t" style="top:214.96px;font-size:6.6px;line-height:6.6px;color:#262630;left:490.20px;-webkit-text-stroke:0.12px #262630;transform-origin:0 0;transform:scaleX(0.8691);">READ ONLY</div>
<div class="t" style="top:214.89px;font-size:6.8px;line-height:6.8px;color:#262630;right:72.90px;-webkit-text-stroke:0.15px #262630;transform-origin:100% 0;transform:scaleX(0.8800);">700</div>
<div class="t" style="top:214.89px;font-size:6.8px;line-height:6.8px;color:#262630;right:14.30px;-webkit-text-stroke:0.15px #262630;transform-origin:100% 0;transform:scaleX(0.8850);">5.742 MB</div>
<div class="t" style="top:227.20px;font-size:6.6px;line-height:6.6px;color:#262630;left:490.20px;-webkit-text-stroke:0.12px #262630;transform-origin:0 0;transform:scaleX(0.8411);">UNACCEPTABLE WEB CATEGORY</div>
<div class="t" style="top:227.13px;font-size:6.8px;line-height:6.8px;color:#262630;right:72.90px;-webkit-text-stroke:0.15px #262630;transform-origin:100% 0;transform:scaleX(0.8800);">17</div>
<div class="t" style="top:227.13px;font-size:6.8px;line-height:6.8px;color:#262630;right:14.30px;-webkit-text-stroke:0.15px #262630;transform-origin:100% 0;transform:scaleX(0.8867);">0 B</div>
<div class="t" style="top:239.44px;font-size:6.6px;line-height:6.6px;color:#262630;left:490.20px;-webkit-text-stroke:0.12px #262630;transform-origin:0 0;transform:scaleX(0.8568);">ENFORCE PARANOID PRIVACY LEVEL</div>
<div class="t" style="top:239.37px;font-size:6.8px;line-height:6.8px;color:#262630;right:72.90px;-webkit-text-stroke:0.15px #262630;transform-origin:100% 0;transform:scaleX(0.8800);">700</div>
<div class="t" style="top:239.37px;font-size:6.8px;line-height:6.8px;color:#262630;right:14.30px;-webkit-text-stroke:0.15px #262630;transform-origin:100% 0;transform:scaleX(0.8850);">5.742 MB</div>
<div class="t" style="top:320.75px;font-size:6.2px;line-height:6.2px;color:#8e4430;left:3.30px;-webkit-text-stroke:0.14px #8e4430;transform-origin:0 0;transform:scaleX(1.0529);">Application Signature</div>
<div class="t" style="top:320.75px;font-size:6.2px;line-height:6.2px;color:#8e4430;right:553.20px;-webkit-text-stroke:0.12px #8e4430;transform-origin:100% 0;transform:scaleX(0.9755);">Requests</div>
<div class="t" style="top:320.75px;font-size:6.2px;line-height:6.2px;color:#8e4430;right:494.40px;-webkit-text-stroke:0.12px #8e4430;transform-origin:100% 0;transform:scaleX(1.0240);">Bandwidth</div>
<div class="t" style="top:332.14px;font-size:6.8px;line-height:6.8px;color:#262630;left:8.30px;-webkit-text-stroke:0.15px #262630;transform-origin:0 0;transform:scaleX(0.9437);">Unidentified Web2.0</div>
<div class="t" style="top:332.14px;font-size:6.8px;line-height:6.8px;color:#262630;right:554.80px;-webkit-text-stroke:0.15px #262630;transform-origin:100% 0;transform:scaleX(0.8800);">36</div>
<div class="t" style="top:332.14px;font-size:6.8px;line-height:6.8px;color:#262630;right:496.20px;-webkit-text-stroke:0.15px #262630;transform-origin:100% 0;transform:scaleX(0.8840);">190.624 KB</div>
<div class="t" style="top:344.38px;font-size:6.8px;line-height:6.8px;color:#262630;left:8.30px;-webkit-text-stroke:0.15px #262630;transform-origin:0 0;transform:scaleX(0.9400);">All Posts</div>
<div class="t" style="top:344.38px;font-size:6.8px;line-height:6.8px;color:#262630;right:554.80px;-webkit-text-stroke:0.15px #262630;transform-origin:100% 0;transform:scaleX(0.8800);">21</div>
<div class="t" style="top:344.38px;font-size:6.8px;line-height:6.8px;color:#262630;right:496.20px;-webkit-text-stroke:0.15px #262630;transform-origin:100% 0;transform:scaleX(0.8867);">0 B</div>
<div class="t" style="top:356.62px;font-size:6.8px;line-height:6.8px;color:#262630;left:8.30px;-webkit-text-stroke:0.15px #262630;transform-origin:0 0;transform:scaleX(0.9455);">All Uploads</div>
<div class="t" style="top:356.62px;font-size:6.8px;line-height:6.8px;color:#262630;right:554.80px;-webkit-text-stroke:0.15px #262630;transform-origin:100% 0;transform:scaleX(0.8800);">21</div>
<div class="t" style="top:356.62px;font-size:6.8px;line-height:6.8px;color:#262630;right:496.20px;-webkit-text-stroke:0.15px #262630;transform-origin:100% 0;transform:scaleX(0.8867);">0 B</div>
<div class="t" style="top:368.86px;font-size:6.8px;line-height:6.8px;color:#262630;left:8.30px;-webkit-text-stroke:0.15px #262630;transform-origin:0 0;transform:scaleX(0.9543);">Firefox</div>
<div class="t" style="top:368.86px;font-size:6.8px;line-height:6.8px;color:#262630;right:554.80px;-webkit-text-stroke:0.15px #262630;transform-origin:100% 0;transform:scaleX(0.8800);">700</div>
<div class="t" style="top:368.86px;font-size:6.8px;line-height:6.8px;color:#262630;right:496.20px;-webkit-text-stroke:0.15px #262630;transform-origin:100% 0;transform:scaleX(0.8850);">5.742 MB</div>
<div class="t" style="top:381.10px;font-size:6.8px;line-height:6.8px;color:#262630;left:8.30px;-webkit-text-stroke:0.15px #262630;transform-origin:0 0;transform:scaleX(0.9543);">Youtube</div>
<div class="t" style="top:381.10px;font-size:6.8px;line-height:6.8px;color:#262630;right:554.80px;-webkit-text-stroke:0.15px #262630;transform-origin:100% 0;transform:scaleX(0.8800);">1</div>
<div class="t" style="top:381.10px;font-size:6.8px;line-height:6.8px;color:#262630;right:496.20px;-webkit-text-stroke:0.15px #262630;transform-origin:100% 0;transform:scaleX(0.8867);">0 B</div>
<div class="t" style="top:393.34px;font-size:6.8px;line-height:6.8px;color:#262630;left:8.30px;-webkit-text-stroke:0.15px #262630;transform-origin:0 0;transform:scaleX(0.9621);">Advertisements</div>
<div class="t" style="top:393.34px;font-size:6.8px;line-height:6.8px;color:#262630;right:554.80px;-webkit-text-stroke:0.15px #262630;transform-origin:100% 0;transform:scaleX(0.8800);">18</div>
<div class="t" style="top:393.34px;font-size:6.8px;line-height:6.8px;color:#262630;right:496.20px;-webkit-text-stroke:0.15px #262630;transform-origin:100% 0;transform:scaleX(0.8867);">0 B</div>
<div class="t" style="top:405.58px;font-size:6.8px;line-height:6.8px;color:#262630;left:8.30px;-webkit-text-stroke:0.15px #262630;transform-origin:0 0;transform:scaleX(0.9517);">Family</div>
<div class="t" style="top:405.58px;font-size:6.8px;line-height:6.8px;color:#262630;right:554.80px;-webkit-text-stroke:0.15px #262630;transform-origin:100% 0;transform:scaleX(0.8800);">633</div>
<div class="t" style="top:405.58px;font-size:6.8px;line-height:6.8px;color:#262630;right:496.20px;-webkit-text-stroke:0.15px #262630;transform-origin:100% 0;transform:scaleX(0.8850);">5.551 MB</div>
<div class="t" style="top:320.75px;font-size:6.2px;line-height:6.2px;color:#8e4430;left:244.05px;-webkit-text-stroke:0.14px #8e4430;transform-origin:0 0;transform:scaleX(1.0549);">Categories</div>
<div class="t" style="top:320.75px;font-size:6.2px;line-height:6.2px;color:#8e4430;right:312.45px;-webkit-text-stroke:0.12px #8e4430;transform-origin:100% 0;transform:scaleX(0.9755);">Requests</div>
<div class="t" style="top:320.75px;font-size:6.2px;line-height:6.2px;color:#8e4430;right:253.65px;-webkit-text-stroke:0.12px #8e4430;transform-origin:100% 0;transform:scaleX(1.0240);">Bandwidth</div>
<div class="t" style="top:332.14px;font-size:6.8px;line-height:6.8px;color:#262630;left:249.05px;-webkit-text-stroke:0.15px #262630;transform-origin:0 0;transform:scaleX(0.9700);">business</div>
<div class="t" style="top:332.14px;font-size:6.8px;line-height:6.8px;color:#262630;right:314.05px;-webkit-text-stroke:0.15px #262630;transform-origin:100% 0;transform:scaleX(0.8800);">672</div>
<div class="t" style="top:332.14px;font-size:6.8px;line-height:6.8px;color:#262630;right:255.45px;-webkit-text-stroke:0.15px #262630;transform-origin:100% 0;transform:scaleX(0.8850);">5.668 MB</div>
<div class="t" style="top:344.38px;font-size:6.8px;line-height:6.8px;color:#262630;left:249.05px;-webkit-text-stroke:0.15px #262630;transform-origin:0 0;transform:scaleX(0.9700);">computersandsoftware</div>
<div class="t" style="top:344.38px;font-size:6.8px;line-height:6.8px;color:#262630;right:314.05px;-webkit-text-stroke:0.15px #262630;transform-origin:100% 0;transform:scaleX(0.8800);">2</div>
<div class="t" style="top:344.38px;font-size:6.8px;line-height:6.8px;color:#262630;right:255.45px;-webkit-text-stroke:0.15px #262630;transform-origin:100% 0;transform:scaleX(0.8844);">72.487 KB</div>
<div class="t" style="top:356.62px;font-size:6.8px;line-height:6.8px;color:#262630;left:249.05px;-webkit-text-stroke:0.15px #262630;transform-origin:0 0;transform:scaleX(0.9700);">pornography</div>
<div class="t" style="top:356.62px;font-size:6.8px;line-height:6.8px;color:#262630;right:314.05px;-webkit-text-stroke:0.15px #262630;transform-origin:100% 0;transform:scaleX(0.8800);">17</div>
<div class="t" style="top:356.62px;font-size:6.8px;line-height:6.8px;color:#262630;right:255.45px;-webkit-text-stroke:0.15px #262630;transform-origin:100% 0;transform:scaleX(0.8867);">0 B</div>
<div class="t" style="top:368.86px;font-size:6.8px;line-height:6.8px;color:#262630;left:249.05px;-webkit-text-stroke:0.15px #262630;transform-origin:0 0;transform:scaleX(0.9700);">searchengines</div>
<div class="t" style="top:368.86px;font-size:6.8px;line-height:6.8px;color:#262630;right:314.05px;-webkit-text-stroke:0.15px #262630;transform-origin:100% 0;transform:scaleX(0.8800);">672</div>
<div class="t" style="top:368.86px;font-size:6.8px;line-height:6.8px;color:#262630;right:255.45px;-webkit-text-stroke:0.15px #262630;transform-origin:100% 0;transform:scaleX(0.8850);">5.668 MB</div>
<div class="t" style="top:381.17px;font-size:6.6px;line-height:6.6px;color:#262630;left:249.05px;-webkit-text-stroke:0.12px #262630;transform-origin:0 0;transform:scaleX(0.8558);">WHITELIST</div>
<div class="t" style="top:381.10px;font-size:6.8px;line-height:6.8px;color:#262630;right:314.05px;-webkit-text-stroke:0.15px #262630;transform-origin:100% 0;transform:scaleX(0.8800);">674</div>
<div class="t" style="top:381.10px;font-size:6.8px;line-height:6.8px;color:#262630;right:255.45px;-webkit-text-stroke:0.15px #262630;transform-origin:100% 0;transform:scaleX(0.8850);">5.741 MB</div>
<div class="t" style="top:393.34px;font-size:6.8px;line-height:6.8px;color:#262630;left:249.05px;-webkit-text-stroke:0.15px #262630;transform-origin:0 0;transform:scaleX(0.9700);">web</div>
<div class="t" style="top:393.34px;font-size:6.8px;line-height:6.8px;color:#262630;right:314.05px;-webkit-text-stroke:0.15px #262630;transform-origin:100% 0;transform:scaleX(0.8800);">17</div>
<div class="t" style="top:393.34px;font-size:6.8px;line-height:6.8px;color:#262630;right:255.45px;-webkit-text-stroke:0.15px #262630;transform-origin:100% 0;transform:scaleX(0.8867);">0 B</div>
<div class="t" style="top:405.58px;font-size:6.8px;line-height:6.8px;color:#262630;left:249.05px;-webkit-text-stroke:0.15px #262630;transform-origin:0 0;transform:scaleX(0.9563);">webPorno</div>
<div class="t" style="top:405.58px;font-size:6.8px;line-height:6.8px;color:#262630;right:314.05px;-webkit-text-stroke:0.15px #262630;transform-origin:100% 0;transform:scaleX(0.8800);">17</div>
<div class="t" style="top:405.58px;font-size:6.8px;line-height:6.8px;color:#262630;right:255.45px;-webkit-text-stroke:0.15px #262630;transform-origin:100% 0;transform:scaleX(0.8867);">0 B</div>
<div class="t" style="top:320.75px;font-size:6.2px;line-height:6.2px;color:#8e4430;left:485.20px;-webkit-text-stroke:0.14px #8e4430;transform-origin:0 0;transform:scaleX(1.0458);">Upload Content</div>
<div class="t" style="top:320.75px;font-size:6.2px;line-height:6.2px;color:#8e4430;right:71.30px;-webkit-text-stroke:0.12px #8e4430;transform-origin:100% 0;transform:scaleX(0.9755);">Requests</div>
<div class="t" style="top:320.75px;font-size:6.2px;line-height:6.2px;color:#8e4430;right:12.50px;-webkit-text-stroke:0.12px #8e4430;transform-origin:100% 0;transform:scaleX(1.0240);">Bandwidth</div>
<svg class="a" style="left:723px;top:80px" width="9" height="335"><rect x="0.600" y="0.000" width="8.400" height="334.500" fill="#f0f0f0"/></svg>
<svg class="a" style="left:724px;top:90px" width="7" height="144"><rect x="0.100" y="0.200" width="6.800" height="143.500" fill="#cdcdcd"/></svg>
<svg class="a" style="left:723.6px;top:83px" width="8.4" height="6" viewBox="0 0 8.4 6"><path d="M2 4.2L4.2 2L6.4 4.2" fill="none" stroke="#3c3c3c" stroke-width="1.1"/></svg>
<svg class="a" style="left:723.6px;top:407.8px" width="8.4" height="6" viewBox="0 0 8.4 6"><path d="M2 1.8L4.2 4L6.4 1.8" fill="none" stroke="#3c3c3c" stroke-width="1.1"/></svg>
<svg class="a" style="left:0px;top:414px" width="732" height="23"><rect x="0.000" y="0.400" width="732.000" height="22.600" fill="#02669c"/></svg>
<svg class="a" style="left:0px;top:414px" width="732" height="2"><rect x="0.000" y="0.600" width="732.000" height="1.000" fill="#00558e"/></svg>
<div class="t" style="top:426.51px;font-size:6.6px;line-height:6.6px;color:#f2f6fa;left:2.80px;-webkit-text-stroke:0.1px #f2f6fa;transform-origin:0 0;transform:scaleX(0.9547);">Wed May 29 2019 14:50:30 GMT+0530 (India Standard Time) : Render Reports</div>
<div class="t" style="top:430.57px;font-size:6.3px;line-height:6.3px;color:#f2f6fa;right:3.10px;-webkit-text-stroke:0.1px #f2f6fa;transform-origin:100% 0;transform:scaleX(0.9689);">2019.0329.1502.3</div>
<svg class="a" style="left:717px;top:417px" width="11" height="11" viewBox="0 0 11 11"><rect x="0" y="0" width="10.9" height="10.9" fill="#ece6e2"/><path d="M2.5 2.5H6.6L8.4 4.3V8.9H2.5z" fill="#b8c4cc" stroke="#2e2418" stroke-width=".95"/><path d="M3.4 3.3V8.2" stroke="#e8f4ff" stroke-width=".7"/><path d="M5.2 5.3L6.4 4.6L6.8 6.0z" fill="#f4fbff"/><path d="M4.2 8L5.6 5.6L7.0 8" fill="none" stroke="#8a7a6a" stroke-width=".5"/></svg>
</body></html>
